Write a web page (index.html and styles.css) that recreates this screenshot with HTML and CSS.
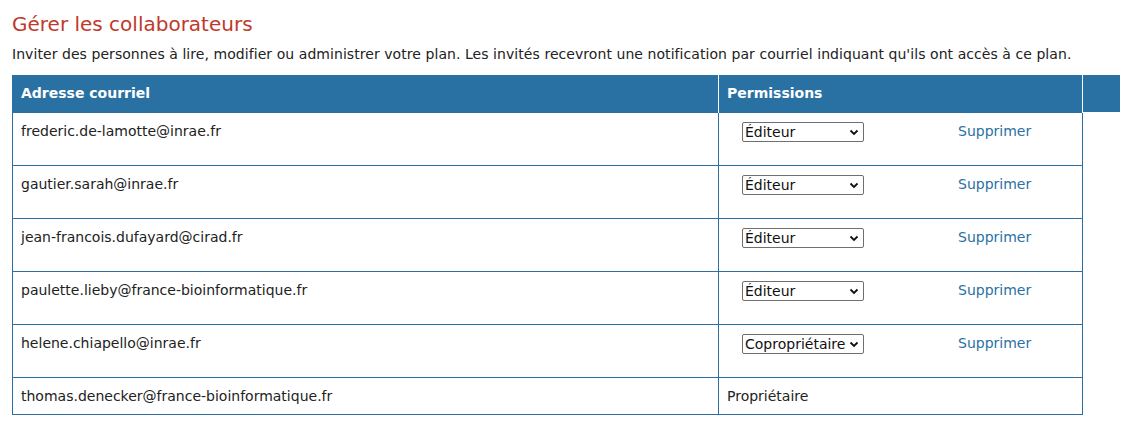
FILE: index.html
```html
<!DOCTYPE html>
<html lang="fr">
<head>
<meta charset="utf-8">
<title>Gérer les collaborateurs</title>
<link rel="stylesheet" href="styles.css">
</head>
<body>
<div class="page">
  <h2 class="title">Gérer les collaborateurs</h2>
  <p class="intro">Inviter des personnes à lire, modifier ou administrer votre plan. Les invités recevront une notification par courriel indiquant qu'ils ont accès à ce plan.</p>
  <table class="collab">
    <thead>
      <tr>
        <th class="c-email">Adresse courriel</th>
        <th class="c-perm">Permissions</th>
        <th class="c-extra"></th>
      </tr>
    </thead>
    <tbody>
      <tr class="row">
        <td>frederic.de-lamotte@inrae.fr</td>
        <td class="perm"><div class="perm-line"><span class="sel"><select><option>Éditeur</option><option>Copropriétaire</option><option>Lecteur</option></select><svg class="chev" width="10" height="7" viewBox="0 0 10 7"><path d="M1.5 1.5 L5 5 L8.5 1.5" fill="none" stroke="#111" stroke-width="1.8"/></svg></span><a href="#" class="del">Supprimer</a></div></td>
      </tr>
      <tr class="row">
        <td>gautier.sarah@inrae.fr</td>
        <td class="perm"><div class="perm-line"><span class="sel"><select><option>Éditeur</option><option>Copropriétaire</option><option>Lecteur</option></select><svg class="chev" width="10" height="7" viewBox="0 0 10 7"><path d="M1.5 1.5 L5 5 L8.5 1.5" fill="none" stroke="#111" stroke-width="1.8"/></svg></span><a href="#" class="del">Supprimer</a></div></td>
      </tr>
      <tr class="row">
        <td>jean-francois.dufayard@cirad.fr</td>
        <td class="perm"><div class="perm-line"><span class="sel"><select><option>Éditeur</option><option>Copropriétaire</option><option>Lecteur</option></select><svg class="chev" width="10" height="7" viewBox="0 0 10 7"><path d="M1.5 1.5 L5 5 L8.5 1.5" fill="none" stroke="#111" stroke-width="1.8"/></svg></span><a href="#" class="del">Supprimer</a></div></td>
      </tr>
      <tr class="row">
        <td>paulette.lieby@france-bioinformatique.fr</td>
        <td class="perm"><div class="perm-line"><span class="sel"><select><option>Éditeur</option><option>Copropriétaire</option><option>Lecteur</option></select><svg class="chev" width="10" height="7" viewBox="0 0 10 7"><path d="M1.5 1.5 L5 5 L8.5 1.5" fill="none" stroke="#111" stroke-width="1.8"/></svg></span><a href="#" class="del">Supprimer</a></div></td>
      </tr>
      <tr class="row">
        <td>helene.chiapello@inrae.fr</td>
        <td class="perm"><div class="perm-line"><span class="sel"><select><option>Copropriétaire</option><option>Éditeur</option><option>Lecteur</option></select><svg class="chev" width="10" height="7" viewBox="0 0 10 7"><path d="M1.5 1.5 L5 5 L8.5 1.5" fill="none" stroke="#111" stroke-width="1.8"/></svg></span><a href="#" class="del">Supprimer</a></div></td>
      </tr>
      <tr class="row-last">
        <td>thomas.denecker@france-bioinformatique.fr</td>
        <td class="owner">Propriétaire</td>
      </tr>
    </tbody>
  </table>
</div>
</body>
</html>
```
FILE: styles.css
```css
html, body {
  margin: 0;
  padding: 0;
  background: #fff;
}
body {
  font-family: "DejaVu Sans", Verdana, sans-serif;
  color: #222;
}
.page {
  padding: 0 12px;
}
.title {
  margin: 0;
  padding-top: 12px;
  font-size: 20px;
  line-height: 25px;
  font-weight: normal;
  color: #c0392b;
}
.intro {
  margin: 8px 0 0;
  font-size: 14px;
  line-height: 18px;
  letter-spacing: 0.06px;
  color: #222;
}
.collab {
  margin-top: 12px;
  border-collapse: collapse;
  width: 1108px;
  font-size: 14px;
}
.collab th {
  background: #2a71a3;
  color: #fff;
  text-align: left;
  font-weight: bold;
  height: 37px;
  padding: 0 8px;
  border-left: 1px solid #fff;
  border-right: 1px solid #fff;
  box-sizing: border-box;
}
.collab th.c-email { width: 706px; border-left: 1px solid #2a71a3; }
.collab th.c-perm { width: 364px; }
.collab th.c-extra { border-right: none; }
.collab td {
  border: 1px solid #2a6fa0;
  padding: 0 8px;
  vertical-align: top;
  color: #222;
}
.row td {
  height: 53px;
  padding-top: 9px;
  box-sizing: border-box;
  line-height: 18px;
}
.row-last td {
  height: 37px;
  line-height: 18px;
  vertical-align: middle;
  box-sizing: border-box;
}
.perm-line {
  display: flex;
  align-items: flex-start;
  padding-left: 15px;
}
.sel {
  position: relative;
  display: inline-block;
  width: 122px;
  height: 20px;
}
.sel select {
  -webkit-appearance: none;
  appearance: none;
  width: 122px;
  height: 20px;
  box-sizing: border-box;
  border: 1px solid #6f6f6f;
  border-radius: 2px;
  background: #fff;
  font-family: "DejaVu Sans", Verdana, sans-serif;
  font-size: 14px;
  color: #111;
  padding: 0 0 0 2px;
  margin: 0;
  line-height: 18px;
}
.chev {
  position: absolute;
  right: 5px;
  top: 7px;
  pointer-events: none;
}
.del {
  margin-left: 94px;
  color: #2a71a3;
  text-decoration: none;
  font-size: 14px;
}
.owner {
  font-size: 14px;
}
```
